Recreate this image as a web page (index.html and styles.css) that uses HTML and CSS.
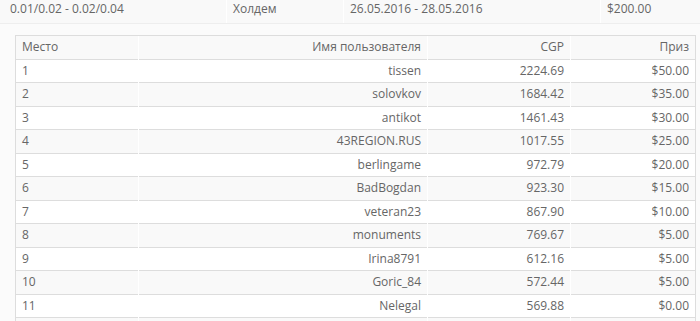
FILE: index.html
```html
<!DOCTYPE html>
<html>
<head>
<meta charset="utf-8">
<link rel="stylesheet" href="styles.css">
</head>
<body>
<table class="outer">
  <tr class="summary">
    <td class="c1">0.01/0.02 - 0.02/0.04</td>
    <td class="c2">Холдем</td>
    <td class="c3">26.05.2016 - 28.05.2016</td>
    <td class="c4">$200.00</td>
  </tr>
  <tr class="details">
    <td colspan="4">
      <table class="results">
        <tr class="head">
          <td class="place">Место</td>
          <td class="user">Имя пользователя</td>
          <td class="cgp">CGP</td>
          <td class="prize">Приз</td>
        </tr>
        <tr><td class="place">1</td><td class="user">tissen</td><td class="cgp">2224.69</td><td class="prize">$50.00</td></tr>
        <tr><td class="place">2</td><td class="user">solovkov</td><td class="cgp">1684.42</td><td class="prize">$35.00</td></tr>
        <tr><td class="place">3</td><td class="user">antikot</td><td class="cgp">1461.43</td><td class="prize">$30.00</td></tr>
        <tr><td class="place">4</td><td class="user">43REGION.RUS</td><td class="cgp">1017.55</td><td class="prize">$25.00</td></tr>
        <tr><td class="place">5</td><td class="user">berlingame</td><td class="cgp">972.79</td><td class="prize">$20.00</td></tr>
        <tr><td class="place">6</td><td class="user">BadBogdan</td><td class="cgp">923.30</td><td class="prize">$15.00</td></tr>
        <tr><td class="place">7</td><td class="user">veteran23</td><td class="cgp">867.90</td><td class="prize">$10.00</td></tr>
        <tr><td class="place">8</td><td class="user">monuments</td><td class="cgp">769.67</td><td class="prize">$5.00</td></tr>
        <tr><td class="place">9</td><td class="user">Irina8791</td><td class="cgp">612.16</td><td class="prize">$5.00</td></tr>
        <tr><td class="place">10</td><td class="user">Goric_84</td><td class="cgp">572.44</td><td class="prize">$5.00</td></tr>
        <tr><td class="place">11</td><td class="user">Nelegal</td><td class="cgp">569.88</td><td class="prize">$0.00</td></tr>
        <tr class="spacer"><td class="place"></td><td class="user"></td><td class="cgp"></td><td class="prize"></td></tr>
      </table>
    </td>
  </tr>
</table>
</body>
</html>
```

FILE: styles.css
```css
html, body {
  margin: 0;
  padding: 0;
  background: #ffffff;
}
body {
  font-family: "Open Sans", "DejaVu Sans", sans-serif;
  font-size: 12px;
  color: #666666;
  overflow: hidden;
}
.outer {
  width: 700px;
  border-collapse: collapse;
  table-layout: fixed;
}
.summary td {
  background: #f9f9f9;
  padding: 0 6px 6px;
  line-height: 17px;
  border-left: 1px solid #ffffff;
  border-bottom: 1px solid #eeeeee;
  white-space: nowrap;
}
.summary td:first-child { border-left: none; padding-left: 10px; }
.summary .c1 { width: 210px; }
.summary .c2 { width: 104px; }
.summary .c3 { width: 244px; }
.details > td {
  background: #fbfbfb;
  padding: 11px 4px 0 15px;
}
.results {
  width: 681px;
  border-collapse: collapse;
  table-layout: fixed;
  border: 1px solid #dddddd;
}
.results td {
  padding: 2px 6px;
  line-height: 18.5px;
  border-top: 1px solid #dddddd;
  border-left: 1px solid #ffffff;
  white-space: nowrap;
}
.results .spacer td { height: 18.5px; }
.results td:first-child { border-left: none; }
.results tr:nth-child(odd) td { background: #f9f9f9; }
.results tr:nth-child(even) td { background: #ffffff; }
.results .place { width: 110px; text-align: left; }
.results .user { width: 276px; text-align: right; }
.results .cgp { width: 130px; text-align: right; }
.results .prize { text-align: right; }
```
